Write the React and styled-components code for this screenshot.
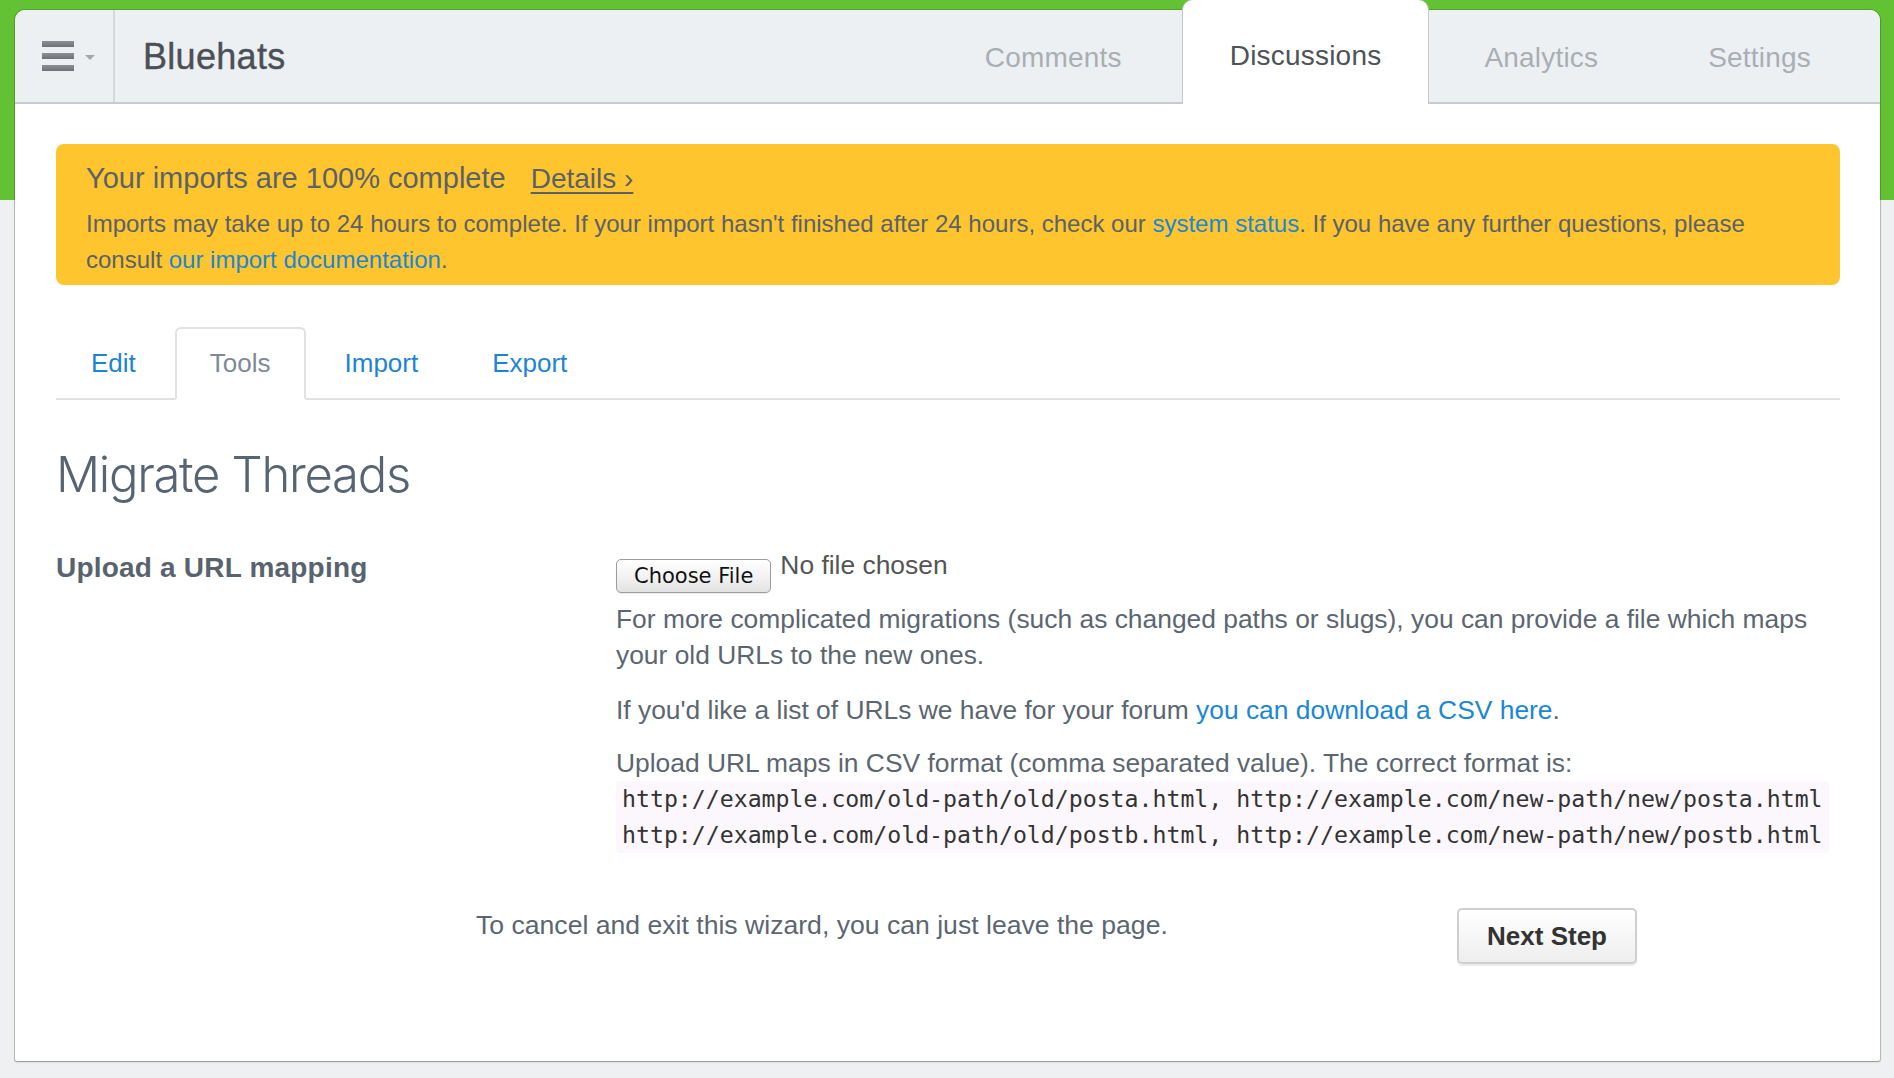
import React from 'react';
import styled, { createGlobalStyle } from 'styled-components';

const GlobalStyle = createGlobalStyle`
  html, body {
    margin: 0;
    padding: 0;
  }
  body {
    font-family: "Liberation Sans", Arial, sans-serif;
    background: linear-gradient(to bottom, #62c234 0, #62c234 200px, #eef0f2 200px);
    color: #5c6670;
  }
  * {
    box-sizing: border-box;
  }
`;

const Page = styled.div`
  min-height: 100vh;
  padding: 10px 14px 17px 15px;
  display: flex;
`;

const Card = styled.div`
  flex: 1;
  display: flex;
  flex-direction: column;
  background: #fff;
  border-radius: 10px 10px 2px 2px;
  box-shadow: 0 0 0 1px rgba(40, 80, 20, 0.25), 0 1px 2px rgba(0, 0, 0, 0.25);
`;

/* top bar */
const Header = styled.div`
  display: flex;
  align-items: stretch;
  height: 94px;
  background: #edf0f3;
  border-bottom: 2px solid #c6cbd1;
  border-radius: 10px 10px 0 0;
`;

const MenuCell = styled.div`
  width: 100px;
  display: flex;
  align-items: center;
  gap: 11px;
  padding-left: 27px;
  border-right: 2px solid #d3d8dd;
`;

const Bars = styled.div`
  display: flex;
  flex-direction: column;
  gap: 6px;
  span {
    display: block;
    width: 32px;
    height: 6px;
    background: linear-gradient(to bottom, #8c8f93, #6e7276);
  }
`;

const Caret = styled.span`
  width: 0;
  height: 0;
  margin-top: 2px;
  border-left: 5px solid transparent;
  border-right: 5px solid transparent;
  border-top: 5px solid #a3a7ab;
`;

const Brand = styled.div`
  display: flex;
  align-items: center;
  padding: 2px 0 0 28px;
  font-size: 36px;
  color: #4b5056;
  letter-spacing: 0.3px;
  -webkit-text-stroke: 0.4px #4b5056;
`;

const Nav = styled.nav`
  margin-left: auto;
  display: flex;
  align-items: stretch;
  padding-right: 14px;
`;

const NavTab = styled.a`
  display: flex;
  align-items: center;
  font-size: 28px;
  letter-spacing: 0.2px;
  text-decoration: none;
  color: ${p => (p.active ? '#4f5358' : '#a9aeb4')};
  padding: ${p => (p.active ? '10px 47px 2px' : '3px 55px 0')};
  ${p =>
    p.active &&
    `
    background: #fff;
    margin-top: -10px;
    margin-bottom: -2px;
    border-left: 1px solid #c3c8ce;
    border-right: 1px solid #c3c8ce;
    border-radius: 10px 10px 0 0;
  `}
  &:first-child {
    padding-right: 60px;
  }
`;

/* body */
const Content = styled.div`
  padding: 40px 40px 0 41px;
`;

const Banner = styled.div`
  background: #fec52e;
  border-radius: 8px;
  padding: 16px 50px 7px 30px;
  color: #5b6168;
`;

const BannerTitle = styled.div`
  display: flex;
  align-items: baseline;
  gap: 25px;
  font-size: 29px;
  line-height: 36px;
  margin-bottom: 9px;
  a {
    font-size: 28px;
    color: #5b6168;
    text-decoration: underline;
    text-underline-offset: 4px;
  }
`;

const BannerText = styled.p`
  margin: 0;
  font-size: 24px;
  line-height: 36px;
`;

const Link = styled.a`
  color: #1b87d4;
  text-decoration: none;
`;

const SubTabs = styled.div`
  display: flex;
  margin-top: 42px;
  border-bottom: 2px solid #dfe1e3;
`;

const SubTab = styled.a`
  height: 73px;
  display: flex;
  align-items: center;
  padding: 0 33px;
  margin-right: 4px;
  margin-bottom: -2px;
  font-size: 26px;
  text-decoration: none;
  color: ${p => (p.active ? '#7d8a96' : '#1d84d4')};
  border: 2px solid ${p => (p.active ? '#dfe1e3' : 'transparent')};
  border-bottom-color: ${p => (p.active ? '#fff' : 'transparent')};
  border-radius: 6px 6px 0 0;
  background: ${p => (p.active ? '#fff' : 'transparent')};
`;

const Title = styled.h1`
  margin: 45px 0 42px;
  font-family: Inter, "Liberation Sans", sans-serif;
  font-weight: 300;
  font-size: 49px;
  line-height: 60px;
  letter-spacing: -1.3px;
  color: #576472;
`;

const FormRow = styled.div`
  display: grid;
  grid-template-columns: 560px 1fr;
`;

const Label = styled.div`
  padding-top: 3px;
  font-size: 28px;
  line-height: 36px;
  font-weight: bold;
  letter-spacing: 0.2px;
  color: #58636e;
`;

const FileRow = styled.div`
  display: flex;
  align-items: flex-start;
  gap: 9px;
`;

const FileButton = styled.button`
  margin-top: 12px;
  height: 34px;
  padding: 0 17px;
  font-family: "DejaVu Sans", sans-serif;
  font-size: 21px;
  color: #111;
  background: linear-gradient(to bottom, #ffffff, #f0f0f0 60%, #e2e2e2);
  border: 1px solid #9c9c9c;
  border-radius: 5px;
  box-shadow: 0 1px 1px rgba(0, 0, 0, 0.08);
`;

const FileName = styled.span`
  font-size: 26.4px;
  line-height: 36px;
  color: #555;
`;

const Text = styled.p`
  margin: ${p => p.mt || 0}px 0 0;
  font-size: 26.4px;
  line-height: 36px;
  color: #5c6670;
`;

const Code = styled.pre`
  width: fit-content;
  margin: 0;
  padding: 0 6px;
  background: #fcf7fc;
  border-radius: 4px;
  font-family: "DejaVu Sans Mono", monospace;
  font-size: 23.2px;
  line-height: 36px;
  color: #333;
`;

const Footer = styled.div`
  display: flex;
  align-items: flex-start;
  margin-top: 54px;
  padding: 0 203px 0 420px;
  color: #5c6670;
  font-size: 26.6px;
  line-height: 36px;
  span {
    flex: 1;
  }
`;

const NextButton = styled.button`
  height: 56px;
  padding: 0 28px;
  margin-top: 1px;
  font-family: "Liberation Sans", Arial, sans-serif;
  font-size: 26px;
  font-weight: bold;
  color: #333;
  background: linear-gradient(to bottom, #ffffff, #eeeeee);
  border: 2px solid #cfcfcf;
  border-radius: 5px;
  box-shadow: 0 2px 1px rgba(0, 0, 0, 0.08);
`;

const App = () => {
  return (
    <Page>
      <GlobalStyle />
      <Card>
        <Header>
          <MenuCell>
            <Bars>
              <span />
              <span />
              <span />
            </Bars>
            <Caret />
          </MenuCell>
          <Brand>Bluehats</Brand>
          <Nav>
            <NavTab href="#">Comments</NavTab>
            <NavTab href="#" active>
              Discussions
            </NavTab>
            <NavTab href="#">Analytics</NavTab>
            <NavTab href="#">Settings</NavTab>
          </Nav>
        </Header>

        <Content>
          <Banner>
            <BannerTitle>
              <span>Your imports are 100% complete</span>
              <a href="#">Details ›</a>
            </BannerTitle>
            <BannerText>
              Imports may take up to 24 hours to complete. If your import hasn't finished after 24
              hours, check our <Link href="#">system status</Link>. If you have any further
              questions, please consult <Link href="#">our import documentation</Link>.
            </BannerText>
          </Banner>

          <SubTabs>
            <SubTab href="#">Edit</SubTab>
            <SubTab href="#" active>
              Tools
            </SubTab>
            <SubTab href="#">Import</SubTab>
            <SubTab href="#">Export</SubTab>
          </SubTabs>

          <Title>Migrate Threads</Title>

          <FormRow>
            <Label>Upload a URL mapping</Label>
            <div>
              <FileRow>
                <FileButton type="button">Choose File</FileButton>
                <FileName>No file chosen</FileName>
              </FileRow>
              <Text mt={8}>
                For more complicated migrations (such as changed paths or slugs), you can provide a
                file which maps your old URLs to the new ones.
              </Text>
              <Text mt={19}>
                If you'd like a list of URLs we have for your forum{' '}
                <Link href="#">you can download a CSV here</Link>.
              </Text>
              <Text mt={17}>
                Upload URL maps in CSV format (comma separated value). The correct format is:
              </Text>
              <Code>
                {'http://example.com/old-path/old/posta.html, http://example.com/new-path/new/posta.html\n'}
                {'http://example.com/old-path/old/postb.html, http://example.com/new-path/new/postb.html'}
              </Code>
            </div>
          </FormRow>

          <Footer>
            <span>To cancel and exit this wizard, you can just leave the page.</span>
            <NextButton type="button">Next Step</NextButton>
          </Footer>
        </Content>
      </Card>
    </Page>
  );
};

export default App;
